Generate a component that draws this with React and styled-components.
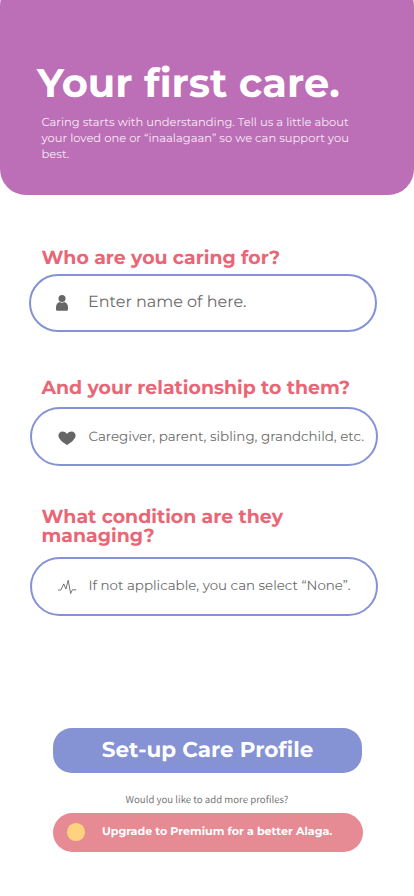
import React from "react";
import styled, { createGlobalStyle } from "styled-components";

const GlobalStyle = createGlobalStyle`
  *, *::before, *::after { box-sizing: border-box; }
  body { margin: 0; background: #fff; font-family: "Montserrat", "Inter", sans-serif; text-rendering: geometricPrecision; }
  button { text-rendering: inherit; }
`;

const Screen = styled.main`
  display: flex;
  flex-direction: column;
  width: 414px;
  height: 896px;
  overflow: hidden;
  background: #fff;
`;

const Header = styled.header`
  height: 215px;
  margin-top: -20px;
  padding: 80px 37px 0;
  flex-shrink: 0;
  border-radius: 26px;
  background: #bc6eb6;
  color: #fff;
`;

const Title = styled.h1`
  margin: 0;
  font-size: 40px;
  font-weight: 700;
  line-height: 48px;
  white-space: nowrap;
`;

const Intro = styled.p`
  width: 318px;
  margin: 6px 0 0 4.5px;
  font-size: 11.52px;
  line-height: 16px;
  color: #f8e9f6;
`;

const Form = styled.form`
  display: flex;
  flex-direction: column;
  padding-top: 53px;
`;

const Field = styled.div`
  display: flex;
  flex-direction: column;
  gap: ${(p) => p.$gap}px;
  height: ${(p) => p.$height}px;
  padding-left: ${(p) => p.$left}px;
`;

const Question = styled.label`
  width: 320px;
  margin-left: ${(p) => p.$indent}px;
  font-size: 18.9px;
  font-weight: 700;
  line-height: 19px;
  color: #e96676;
`;

const InputPill = styled.div`
  display: flex;
  align-items: center;
  width: 347.5px;
  height: ${(p) => p.$height}px;
  flex-shrink: 0;
  border: 2px solid #8592d4;
  border-radius: 29.5px;
  background: #fff;
`;

const IconSlot = styled.span`
  display: flex;
  width: ${(p) => p.$width}px;
  padding-left: ${(p) => p.$left}px;
  padding-top: ${(p) => p.$drop}px;
  flex-shrink: 0;

  svg { display: block; }
`;

const Placeholder = styled.span`
  padding-bottom: ${(p) => p.$lift}px;
  font-size: ${(p) => p.$size}px;
  line-height: 20px;
  color: #6b6b6b;
  white-space: nowrap;
`;

const Actions = styled.section`
  display: flex;
  flex-direction: column;
  align-items: flex-start;
  padding-left: 52.5px;
`;

const PrimaryButton = styled.button`
  width: 309px;
  height: 45px;
  margin: 0;
  padding: 0 0 0 1px;
  border: 0;
  border-radius: 19px;
  background: #8592d3;
  color: #fff;
  font: 700 21.5px/26px "Montserrat", "Inter", sans-serif;
`;

const Caption = styled.p`
  width: 309px;
  margin: 19px 0 7px;
  font-family: "Noto Sans CJK SC", "Noto Sans", sans-serif;
  font-size: 9.65px;
  line-height: 14px;
  text-align: center;
  color: #777;
`;

const PremiumButton = styled.button`
  display: flex;
  align-items: center;
  width: 310.5px;
  height: 39px;
  padding: 0 0 0 14.5px;
  border: 0;
  border-radius: 19.5px;
  background: #e68a94;
  color: #fff;
  font: 700 11.12px/14px "Montserrat", "Inter", sans-serif;
  white-space: nowrap;
`;

const Coin = styled.span`
  width: 17.5px;
  height: 17.5px;
  margin-right: 17.5px;
  border-radius: 50%;
  background: #ffd27f;
`;

const PremiumLabel = styled.span`
  padding-bottom: 2px;
`;

const PersonIcon = () => (
  <svg width="12" height="16" viewBox="0 0 12 16" fill="#666">
    <circle cx="6" cy="3.6" r="3.5" />
    <path d="M0 12.4C0 9.5 1.6 7.5 3.6 7c1.4 1 3.4 1 4.8 0C10.4 7.5 12 9.5 12 12.4v2.2c0 .7-.4 1.1-1.1 1.1H1.1C.4 15.7 0 15.3 0 14.6Z" />
  </svg>
);

const HeartIcon = () => (
  <svg width="18" height="15" viewBox="0 0 18 15" fill="#666">
    <path d="M9 14.3C7.7 13 .4 9.4.4 4.6.4 2.1 2.2.4 4.6.4 6.5.4 8.2 1.3 9 2.9 9.8 1.3 11.5.4 13.400.4c2.4 0 4.2 1.7 4.2 4.2C17.6 9.4 10.3 13 9 14.3Z" />
  </svg>
);

const PulseIcon = () => (
  <svg width="19" height="16" viewBox="0 0 19 16" fill="none" stroke="#666" strokeWidth="0.9" strokeLinejoin="round" strokeLinecap="round">
    <path d="M.4 11H2.9L5.8 4.9 7.9 10 10.2 1.2 12.6 14.5 14.4 10.8H17.9" />
  </svg>
);

export default function App() {
  return (
    <>
      <GlobalStyle />
      <Screen>
        <Header>
          <Title>Your first care.</Title>
          <Intro>
            Caring starts with understanding. Tell us a little about your loved one or “inaalagaan” so we can support you best.
          </Intro>
        </Header>
        <Form>
          <Field $gap={7} $height={130} $left={29}>
            <Question $indent={12.5}>Who are you caring for?</Question>
            <InputPill $height={58}>
              <IconSlot $width={57} $left={25} $drop={0}><PersonIcon /></IconSlot>
              <Placeholder $size={16} $lift={0}>Enter name of here.</Placeholder>
            </InputPill>
          </Field>
          <Field $gap={10} $height={129} $left={30}>
            <Question $indent={11.5}>And your relationship to them?</Question>
            <InputPill $height={59}>
              <IconSlot $width={56.5} $left={25.5} $drop={3}><HeartIcon /></IconSlot>
              <Placeholder $size={13.42} $lift={0}>Caregiver, parent, sibling, grandchild, etc.</Placeholder>
            </InputPill>
          </Field>
          <Field $gap={12} $height={220.5} $left={30}>
            <Question $indent={11.5}>What condition are they<br />managing?</Question>
            <InputPill $height={59}>
              <IconSlot $width={56.5} $left={25.5} $drop={0}><PulseIcon /></IconSlot>
              <Placeholder $size={13.38} $lift={1.5}>If not applicable, you can select “None”.</Placeholder>
            </InputPill>
          </Field>
        </Form>
        <Actions>
          <PrimaryButton>Set-up Care Profile</PrimaryButton>
          <Caption>Would you like to add more profiles?</Caption>
          <PremiumButton>
            <Coin />
            <PremiumLabel>Upgrade to Premium for a better Alaga.</PremiumLabel>
          </PremiumButton>
        </Actions>
      </Screen>
    </>
  );
}
